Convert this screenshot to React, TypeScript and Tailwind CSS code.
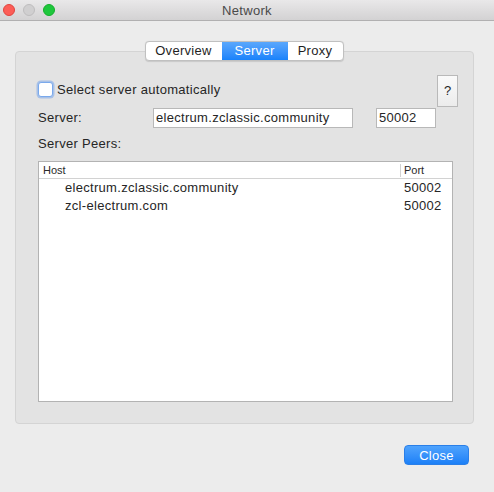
export default function App() {
  const peers = [
    { host: 'electrum.zclassic.community', port: '50002' },
    { host: 'zcl-electrum.com', port: '50002' },
  ];

  return (
    <div className="w-[494px] h-[492px] bg-[#ececec] flex flex-col font-['Liberation_Sans',Arial,sans-serif] text-[13px] tracking-[0.3px] text-[#262626] overflow-hidden">
      {/* Title bar */}
      <div className="relative h-[21px] shrink-0 flex items-center justify-center bg-gradient-to-b from-[#e9e8e9] to-[#d3d2d3] border-b border-[#b1b0b1]">
        <div className="absolute left-[3px] top-[4px] flex gap-[8px]">
          <span className="w-[12px] h-[12px] rounded-full bg-[#fc5d57] border border-[#e0443e]" />
          <span className="w-[12px] h-[12px] rounded-full bg-[#d0cfd0] border border-[#bebdbe]" />
          <span className="w-[12px] h-[12px] rounded-full bg-[#1ec73c] border border-[#14ae2b]" />
        </div>
        <span className="text-[13px] text-[#4a4a4a] leading-none pt-px">Network</span>
      </div>

      <div className="flex flex-col w-[474px] pl-[15px] pt-[20px]">
        {/* Tabs */}
        <div className="relative z-10 flex justify-center -mb-[10px] pr-px">
          <div className="flex h-[20px] rounded-[4px] border border-[#c0c0c0] bg-white overflow-hidden shadow-[0_0.5px_1px_rgba(0,0,0,0.12)]">
            <div className="w-[76px] flex items-center justify-center text-[#1f1f1f]">Overview</div>
            <div className="w-[66px] flex items-center justify-center text-white bg-gradient-to-b from-[#59a7fc] to-[#1782fb]">Server</div>
            <div className="w-[55px] flex items-center justify-center text-[#1f1f1f]">Proxy</div>
          </div>
        </div>

        {/* Panel */}
        <div className="h-[373px] bg-[#e3e3e3] border border-[#d4d4d4] rounded-[4px] flex flex-col pl-[22px] pr-[15px] pt-[23px]">
          <div className="flex items-start justify-between">
            <label className="flex items-center gap-[4px] mt-[7px]">
              <span className="w-[15px] h-[15px] rounded-[3px] bg-white border border-[#7aa9ec] shadow-[0_0_0_1.5px_rgba(120,165,235,0.55)]" />
              <span className="leading-[15px]">Select server automatically</span>
            </label>
            <div className="w-[21px] h-[32px] flex items-center justify-center border border-[#b9b9b9] bg-gradient-to-b from-[#fafafa] to-[#ececec] text-[13px] tracking-normal">
              ?
            </div>
          </div>

          <div className="flex items-center mt-px">
            <span className="w-[115px]">Server:</span>
            <div className="w-[200px] h-[20px] bg-white border border-[#b8b8b8] flex items-center px-[2px]">
              electrum.zclassic.community
            </div>
            <div className="ml-[23px] w-[60px] h-[20px] bg-white border border-[#b8b8b8] flex items-center px-[2px]">
              50002
            </div>
          </div>

          <div className="mt-[8px] h-[16px] leading-[16px]">Server Peers:</div>

          {/* Peers table */}
          <div className="mt-[9px] w-[415px] h-[241px] bg-white border border-[#b3b3b3] flex flex-col">
            <div className="h-[17px] flex items-center border-b border-[#d2d2d2] text-[11px] tracking-normal text-[#2a2a2a]">
              <div className="flex-1 pl-[4px]">Host</div>
              <div className="w-[52px] h-[13px] border-l border-[#d2d2d2] pl-[3px] flex items-center">Port</div>
            </div>
            <div className="flex flex-col">
              {peers.map((p) => (
                <div key={p.host} className="h-[18px] flex items-center">
                  <div className="flex-1 pl-[26px]">{p.host}</div>
                  <div className="w-[52px] pl-[4px]">{p.port}</div>
                </div>
              ))}
            </div>
          </div>
        </div>
      </div>

      <div className="flex justify-end pr-[25px] mt-[21px]">
        <button className="w-[65px] h-[20px] rounded-[4px] bg-gradient-to-b from-[#4fa3fd] to-[#1b80f7] border border-[#2a7fe8] text-white text-[13px] leading-none">
          Close
        </button>
      </div>
    </div>
  );
}
